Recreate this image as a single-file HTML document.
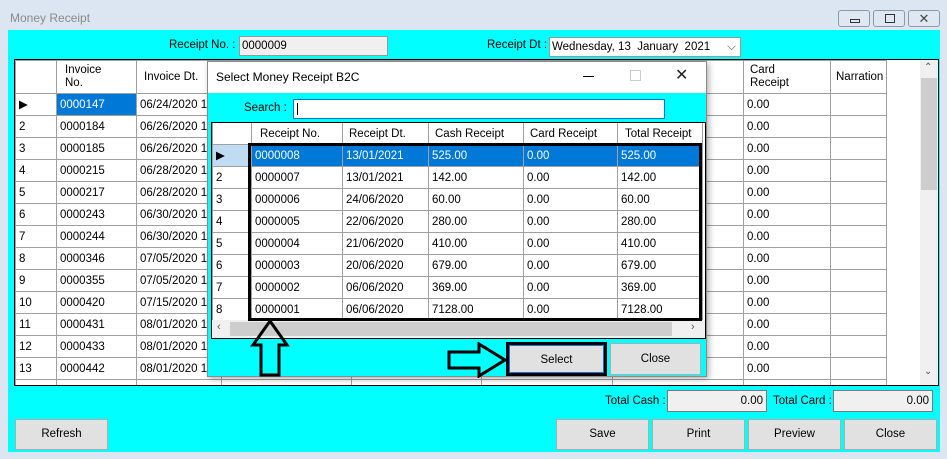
<!DOCTYPE html><html><head><style>
*{box-sizing:border-box;margin:0;padding:0}
body{width:947px;height:459px;overflow:hidden;background:#dbe6f2;font-family:"Liberation Sans",sans-serif;font-size:11.5px;position:relative;color:#000}
.a{position:absolute}
.cyan{background:#00ffff}
.btn{position:absolute;background:#e1e1e1;border:1px solid #adadad;text-align:center;font-size:11.5px}
table{border-collapse:collapse;position:absolute;background:#fff;table-layout:fixed}
td{border:1px solid #a0a0a0;height:22px;padding:0 0 0 3px;white-space:nowrap;overflow:hidden;font-size:11.5px;line-height:14px}
.sel td{background:#0078d7;color:#fff}
.inp{position:absolute;background:#f0f0f0;border:1px solid #7a7a7a;text-align:right;padding-right:3px;font-size:11.5px;line-height:20px}
</style></head><body>
<div class="a" style="left:10px;top:11px;color:#8a8a8a;font-size:12px">Money Receipt</div>
<div class="a" style="left:838px;top:10px;width:32px;height:17px;border:1px solid #8899aa;border-radius:3px;background:#dfe8f2"><div class="a" style="left:11px;top:8px;width:10px;height:4px;border:1px solid #333"></div></div>
<div class="a" style="left:873px;top:10px;width:32px;height:17px;border:1px solid #8899aa;border-radius:3px;background:#dfe8f2"><div class="a" style="left:11px;top:3px;width:10px;height:9px;border:1px solid #333"></div></div>
<div class="a" style="left:908px;top:10px;width:32px;height:17px;border:1px solid #8899aa;border-radius:3px;background:#dfe8f2;text-align:center;line-height:15px;font-size:13px;color:#444">✕</div>
<div class="a cyan" style="left:8px;top:30px;width:932px;height:422px"></div>
<div class="a" style="left:169px;top:39px">Receipt No. :</div>
<div class="a" style="left:239px;top:36px;width:149px;height:20px;border:1px solid #999;background:#f0f0f0;padding-left:2px;line-height:18px">0000009</div>
<div class="a" style="left:487px;top:39px">Receipt Dt :</div>
<div class="a" style="left:549px;top:37px;width:192px;height:20px;border:1px solid #999;background:#fff;padding-left:2px;line-height:18px">Wednesday, 13 &nbsp;January &nbsp;2021<span style="position:absolute;right:4px;top:0;color:#555">⌵</span></div>
<!-- main grid -->
<div class="a" style="left:14px;top:59px;width:925px;height:327px;border:1px solid #000;background:#fff;overflow:hidden">
<table style="left:0;top:0;width:872px">
<colgroup><col style="width:41px"><col style="width:80px"><col style="width:85px"><col style="width:130px"><col style="width:130px"><col style="width:131px"><col style="width:131px"><col style="width:87px"><col style="width:56px"><col style="width:1px"></colgroup>
<tr><td style="height:33px"></td><td style="padding-left:8px;line-height:13px">Invoice<br>No.</td><td style="padding-left:7px">Invoice Dt.</td><td></td><td></td><td></td><td></td><td style="line-height:13px;padding-left:6px">Card<br>Receipt</td><td style="padding-left:5px">Narration</td><td style="border:none"></td></tr>
<tr><td>▶</td><td style="background:#0078d7;color:#fff">0000147</td><td>06/24/2020 1</td><td></td><td></td><td></td><td></td><td>0.00</td><td></td><td style="border:none"></td></tr>
<tr><td>2</td><td>0000184</td><td>06/26/2020 1</td><td></td><td></td><td></td><td></td><td>0.00</td><td></td><td style="border:none"></td></tr>
<tr><td>3</td><td>0000185</td><td>06/26/2020 1</td><td></td><td></td><td></td><td></td><td>0.00</td><td></td><td style="border:none"></td></tr>
<tr><td>4</td><td>0000215</td><td>06/28/2020 1</td><td></td><td></td><td></td><td></td><td>0.00</td><td></td><td style="border:none"></td></tr>
<tr><td>5</td><td>0000217</td><td>06/28/2020 1</td><td></td><td></td><td></td><td></td><td>0.00</td><td></td><td style="border:none"></td></tr>
<tr><td>6</td><td>0000243</td><td>06/30/2020 1</td><td></td><td></td><td></td><td></td><td>0.00</td><td></td><td style="border:none"></td></tr>
<tr><td>7</td><td>0000244</td><td>06/30/2020 1</td><td></td><td></td><td></td><td></td><td>0.00</td><td></td><td style="border:none"></td></tr>
<tr><td>8</td><td>0000346</td><td>07/05/2020 1</td><td></td><td></td><td></td><td></td><td>0.00</td><td></td><td style="border:none"></td></tr>
<tr><td>9</td><td>0000355</td><td>07/05/2020 1</td><td></td><td></td><td></td><td></td><td>0.00</td><td></td><td style="border:none"></td></tr>
<tr><td>10</td><td>0000420</td><td>07/15/2020 1</td><td></td><td></td><td></td><td></td><td>0.00</td><td></td><td style="border:none"></td></tr>
<tr><td>11</td><td>0000431</td><td>08/01/2020 1</td><td></td><td></td><td></td><td></td><td>0.00</td><td></td><td style="border:none"></td></tr>
<tr><td>12</td><td>0000433</td><td>08/01/2020 1</td><td></td><td></td><td></td><td></td><td>0.00</td><td></td><td style="border:none"></td></tr>
<tr><td>13</td><td>0000442</td><td>08/01/2020 1</td><td></td><td></td><td></td><td></td><td>0.00</td><td></td><td style="border:none"></td></tr>
<tr><td></td><td></td><td></td><td></td><td></td><td></td><td></td><td></td><td></td><td style="border:none"></td></tr>
</table>
<div class="a" style="left:905px;top:0;width:18px;height:325px;background:#f0f0f0"><div class="a" style="left:1px;top:18px;width:16px;height:112px;background:#cdcdcd"></div><div class="a" style="left:4px;top:2px;font-size:10px;color:#555">⌃</div><div class="a" style="left:4px;top:306px;font-size:10px;color:#555">⌄</div></div>
</div>
<!-- dialog -->
<div class="a" style="left:207px;top:61px;width:500px;height:316px;border:1px solid #8a8a8a;background:#00ffff;box-shadow:2px 2px 6px rgba(0,0,0,.3)">
<div class="a" style="left:0;top:0;width:498px;height:31px;background:#fff"></div>
<div class="a" style="left:8px;top:8px;font-size:12px">Select Money Receipt B2C</div>
<div class="a" style="left:375px;top:14px;width:11px;height:1px;background:#000"></div>
<div class="a" style="left:422px;top:8px;width:11px;height:11px;border:1px solid #ccc"></div>
<div class="a" style="left:467px;top:3px;font-size:16px;color:#222">✕</div>
<div class="a" style="left:36px;top:40px">Search :</div>
<div class="a" style="left:85px;top:37px;width:372px;height:20px;border:1px solid #0078d7;background:#fff"><div class="a" style="left:3px;top:3px;width:1px;height:12px;background:#000"></div></div>
<div class="a" style="left:3px;top:60px;width:495px;height:217px;border:1px solid #000;background:#fff;overflow:hidden">
<table style="left:0;top:-1px;width:490px">
<colgroup><col style="width:39px"><col style="width:91px"><col style="width:86px"><col style="width:95px"><col style="width:94px"><col style="width:85px"></colgroup>
<tr><td style="height:21px"></td><td style="padding-left:8px">Receipt No.</td><td style="padding-left:6px">Receipt Dt.</td><td style="padding-left:6px">Cash Receipt</td><td style="padding-left:6px">Card Receipt</td><td style="padding-left:7px">Total Receipt</td></tr>
<tr class="sel"><td style="background:#bfdcf2;color:#000">▶</td><td>0000008</td><td>13/01/2021</td><td>525.00</td><td>0.00</td><td>525.00</td></tr>
<tr><td>2</td><td>0000007</td><td>13/01/2021</td><td>142.00</td><td>0.00</td><td>142.00</td></tr>
<tr><td>3</td><td>0000006</td><td>24/06/2020</td><td>60.00</td><td>0.00</td><td>60.00</td></tr>
<tr><td>4</td><td>0000005</td><td>22/06/2020</td><td>280.00</td><td>0.00</td><td>280.00</td></tr>
<tr><td>5</td><td>0000004</td><td>21/06/2020</td><td>410.00</td><td>0.00</td><td>410.00</td></tr>
<tr><td>6</td><td>0000003</td><td>20/06/2020</td><td>679.00</td><td>0.00</td><td>679.00</td></tr>
<tr><td>7</td><td>0000002</td><td>06/06/2020</td><td>369.00</td><td>0.00</td><td>369.00</td></tr>
<tr><td>8</td><td>0000001</td><td>06/06/2020</td><td>7128.00</td><td>0.00</td><td>7128.00</td></tr>
</table>
<div class="a" style="left:0;top:197px;width:493px;height:18px;background:#f0f0f0"><div class="a" style="left:18px;top:2px;width:442px;height:14px;background:#cdcdcd"></div><div class="a" style="left:5px;top:1px;font-size:11px;color:#555">‹</div><div class="a" style="left:479px;top:1px;font-size:11px;color:#555">›</div></div>
</div>
<div class="a" style="left:40px;top:81px;width:454px;height:178px;border:3px solid #000"></div>
<div class="btn" style="left:298px;top:280px;width:101px;height:34px;border:3px solid #000;line-height:28px"><div style="border:1px solid #0078d7;height:28px">Select</div></div>
<div class="btn" style="left:402px;top:281px;width:91px;height:32px;line-height:30px">Close</div>
<svg class="a" style="left:42px;top:257px" width="40" height="58"><polygon points="20,2 37,26 29,26 29,56 11,56 11,26 3,26" fill="none" stroke="#000" stroke-width="3"/></svg>
<svg class="a" style="left:239px;top:280px" width="60" height="36"><polygon points="2,10 32,10 32,2 58,18 32,34 32,26 2,26" fill="none" stroke="#000" stroke-width="3"/></svg>
</div>
<!-- bottom -->
<div class="a" style="left:605px;top:395px">Total Cash :</div>
<div class="inp" style="left:667px;top:390px;width:100px;height:22px">0.00</div>
<div class="a" style="left:773px;top:395px">Total Card :</div>
<div class="inp" style="left:833px;top:390px;width:100px;height:22px">0.00</div>
<div class="btn" style="left:15px;top:419px;width:93px;height:31px;line-height:29px">Refresh</div>
<div class="btn" style="left:556px;top:419px;width:93px;height:31px;line-height:29px">Save</div>
<div class="btn" style="left:652px;top:419px;width:93px;height:31px;line-height:29px">Print</div>
<div class="btn" style="left:748px;top:419px;width:93px;height:31px;line-height:29px">Preview</div>
<div class="btn" style="left:844px;top:419px;width:93px;height:31px;line-height:29px">Close</div>
</body></html>
